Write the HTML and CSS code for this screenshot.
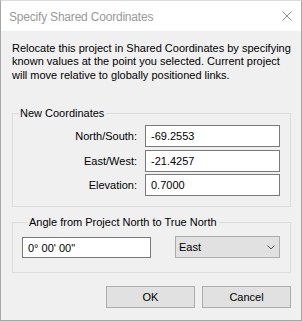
FILE: index.html
```html
<!DOCTYPE html>
<html>
<head>
<meta charset="utf-8">
<link rel="stylesheet" href="styles.css">
</head>
<body>
<div class="window">
  <div class="titlebar">
    <span class="title">Specify Shared Coordinates</span>
    <svg class="close" width="10" height="10" viewBox="0 0 10 10"><path d="M0.5 0.5 L9.5 9.5 M9.5 0.5 L0.5 9.5" stroke="#8a8a8a" stroke-width="1" fill="none"/></svg>
  </div>
  <div class="content">
    <p class="intro">Relocate this project in Shared Coordinates by specifying<br>known values at the point you selected. Current project<br>will move relative to globally positioned links.</p>
    <fieldset class="group">
      <legend class="legend">New Coordinates</legend>
      <div class="coords">
        <label class="lbl">North/South:</label><div class="field">-69.2553</div>
        <label class="lbl">East/West:</label><div class="field">-21.4257</div>
        <label class="lbl">Elevation:</label><div class="field">0.7000</div>
      </div>
    </fieldset>
    <fieldset class="group group2">
      <legend class="legend">Angle from Project North to True North</legend>
      <div class="anglerow">
        <div class="field angle">0° 00' 00"</div>
        <div class="combo"><span>East</span><svg class="chev" width="8" height="5" viewBox="0 0 8 5"><path d="M0.5 0.5 L4 4 L7.5 0.5" stroke="#555" stroke-width="1" fill="none"/></svg></div>
      </div>
    </fieldset>
    <div class="buttons">
      <div class="btn">OK</div>
      <div class="btn">Cancel</div>
    </div>
  </div>
</div>
</body>
</html>
```
FILE: styles.css
```css
html, body {
  margin: 0;
  padding: 0;
  background: #f0f0f0;
}
body {
  width: 302px;
  height: 321px;
  font-family: "Liberation Sans", Arial, sans-serif;
  font-size: 11px;
  color: #000;
}
.window {
  box-sizing: border-box;
  width: 302px;
  height: 321px;
  border: 1px solid #a6a6a6;
  border-top-color: #dcdcdc;
  background: #f0f0f0;
  display: flex;
  flex-direction: column;
}
.titlebar {
  height: 30px;
  background: #fff;
  display: flex;
  align-items: center;
  justify-content: space-between;
  padding: 0 9px 0 8px;
}
.title {
  font-size: 12px;
  letter-spacing: -0.2px;
  color: #999;
  margin-top: 1px;
}
.close {
  display: block;
}
.content {
  flex: 1;
  padding: 11px 10px 0 11px;
}
.intro {
  margin: 0 0 0 0;
  line-height: 13.4px;
}
.group {
  margin: 24px 0 0 0;
  padding: 0 10px 10px 0;
  border: 1px solid #dcdcdc;
  min-width: 0;
}
.legend {
  margin-left: 6px;
  padding: 0 2px 0 1px;
  line-height: 14px;
}
.coords {
  display: grid;
  grid-template-columns: 1fr 135px;
  column-gap: 8px;
  row-gap: 2.5px;
  margin-top: 5px;
}
.lbl {
  text-align: right;
  align-self: center;
}
.field {
  box-sizing: border-box;
  height: 22px;
  border: 1px solid #7a7a7a;
  background: #fff;
  padding: 0 5px;
  display: flex;
  align-items: center;
}
.group2 {
  margin-top: 8px;
  padding: 0 10px 14px 9px;
}
.anglerow {
  display: flex;
  justify-content: space-between;
  align-items: center;
  margin-top: 7px;
}
.angle {
  width: 129px;
  height: 21px;
  margin-top: 1px;
}
.combo {
  box-sizing: border-box;
  width: 105px;
  height: 22px;
  border: 1px solid #adadad;
  background: #e1e1e1;
  display: flex;
  align-items: center;
  justify-content: space-between;
  padding: 0 4px 0 3px;
}
.chev {
  display: block;
}
.buttons {
  display: flex;
  justify-content: flex-end;
  gap: 7px;
  margin-top: 13px;
}
.btn {
  box-sizing: border-box;
  width: 89px;
  height: 22px;
  border: 1px solid #adadad;
  background: #e1e1e1;
  display: flex;
  align-items: center;
  justify-content: center;
}
```
